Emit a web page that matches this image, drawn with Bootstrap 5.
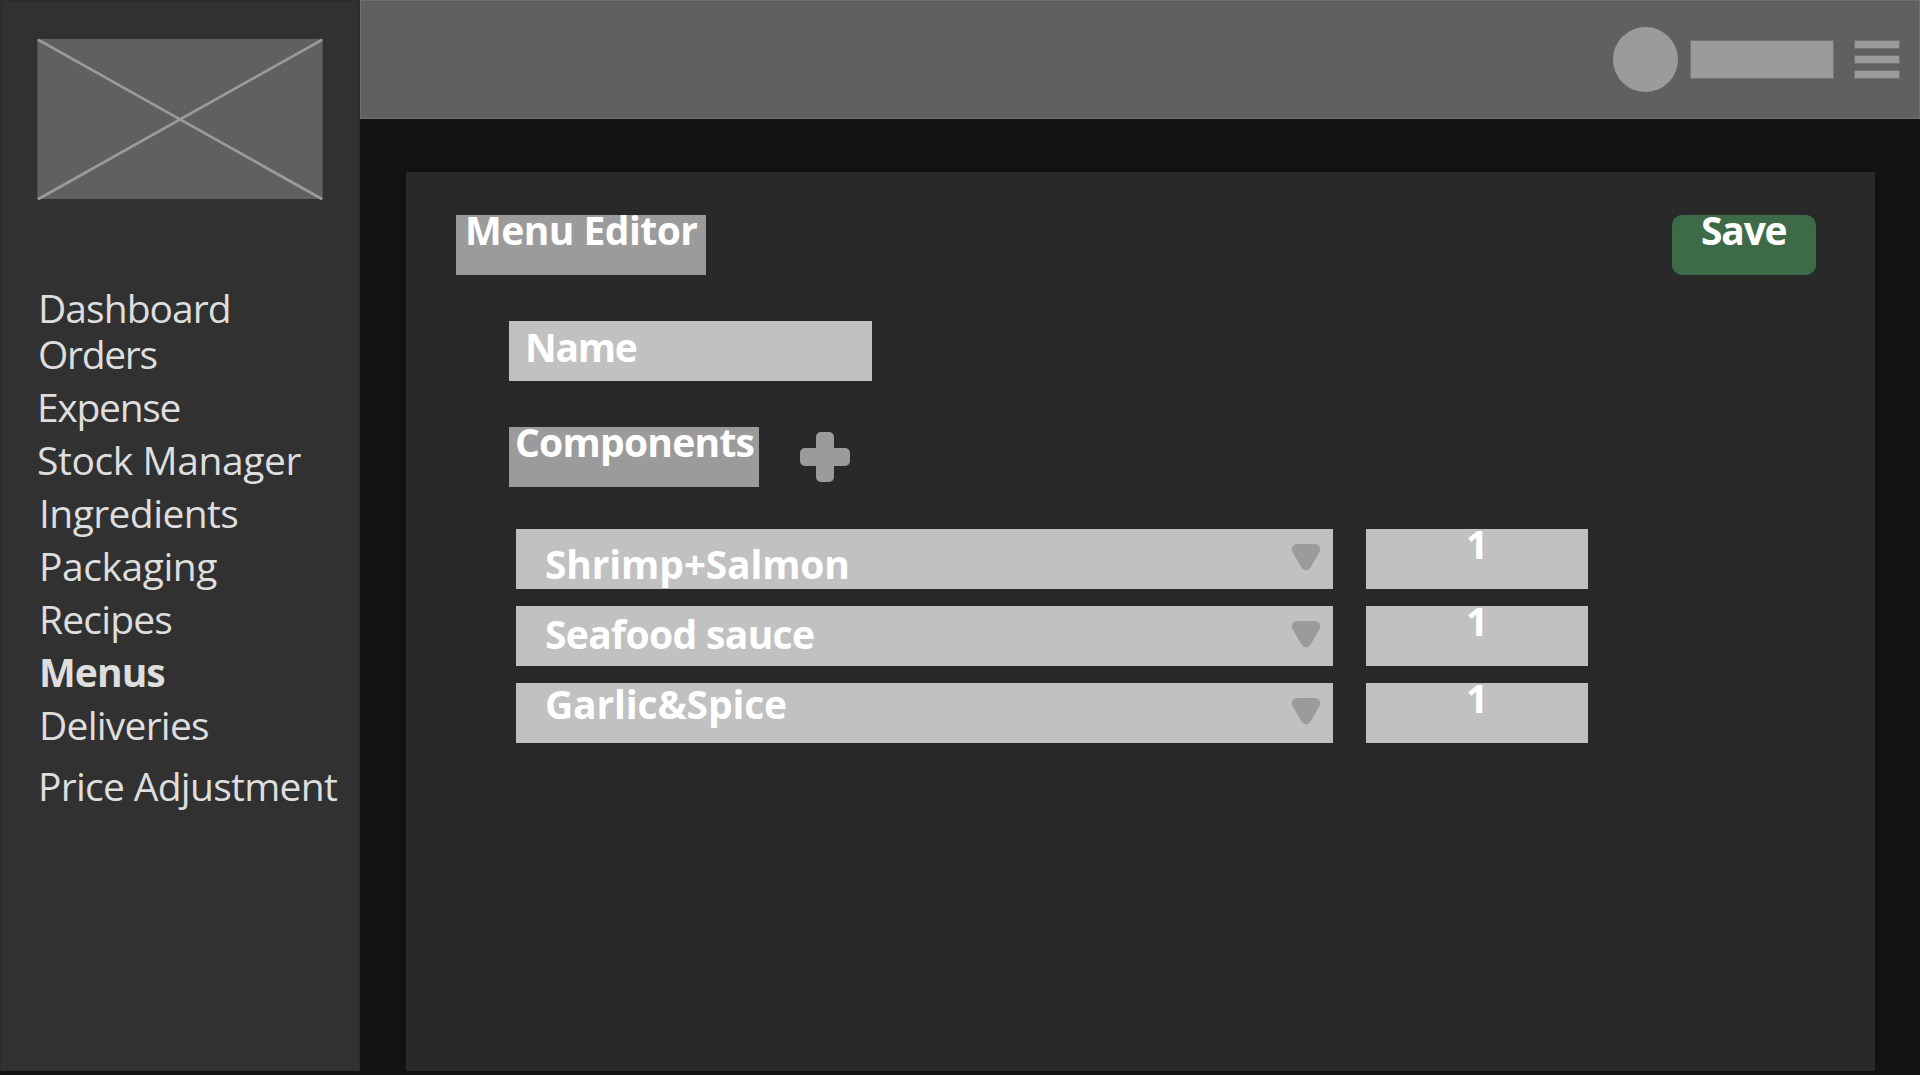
<!DOCTYPE html>
<html lang="en">
<head>
<meta charset="utf-8">
<meta name="viewport" content="width=device-width, initial-scale=1">
<title>Menu Editor</title>
<link href="https://cdn.jsdelivr.net/npm/bootstrap@5.3.0/dist/css/bootstrap.min.css" rel="stylesheet">
<style>
body{background:#121212;font-family:"Open Sans","Noto Sans",sans-serif;font-size:39px;height:1075px;overflow:hidden}
.shell{height:1071px}
.side{width:360px;background:#313131;border:1px solid #2b2b2b;padding:37px 0 0 36px}
.logo{display:block;width:288px;height:163px}
.side-nav{margin-top:80px;line-height:53px}
.side-nav a{color:#dedede;padding:0 0 0 1px;line-height:53px;font-size:39px;white-space:nowrap}
.top-bar{height:119px;background:#606060;border:1px solid #707070;padding-right:19px}
.avatar{width:65px;height:65px;background:#9b9b9b;margin-right:12px}
.user-name{width:144px;height:39px;background:#9b9b9b;border:1px solid #727272;margin-right:20px}
.burger{width:46px;height:39px;background:none}
.burger i{height:9px;background:#9b9b9b;border:1px solid #727272}
.panel{margin:53px 45px 0 46px;background:#292929;padding:43px 59px 0 50px}
.tag,.field,.save-btn{height:60px;line-height:29px;font-weight:700;color:#fff;white-space:nowrap;text-align:left}
.tag{width:250px;background:#9b9b9b}
.field{background:#c1c1c1}
.save-btn,.save-btn:hover{width:144px;background:#3d6b47;border:0;border-radius:10px;padding:0 0 0 29px;font-size:39px;color:#fff;letter-spacing:-1.2px;display:block}
.save-btn span{display:block;height:60px}
.editor{padding-left:53px}
.name-field{width:363px;margin-top:46px;padding:11px 0 0 16px;letter-spacing:-1.25px}
.comp-head{margin-top:46px}
.plus{width:50px;height:50px;margin-left:41px}
.rows{margin:42px 0 0 7px;gap:17px}
.pick{width:817px;padding-left:29px;padding-right:12px}
.pick svg{width:30px;height:27px;margin-top:15px}
.qty{width:222px;margin-left:33px;padding-left:100px}
</style>
</head>
<body>
<div class="shell d-flex">
  <aside class="side flex-shrink-0">
    <svg class="logo" viewBox="0 0 288 163"><rect x=".3" y="1" width="285.4" height="160" fill="#606060"/><path d="M1 1.6 285.3 161.2M285.3 1.6 1 161.2" stroke="#9b9b9b" stroke-width="2.7" fill="none"/></svg>
    <nav class="side-nav nav flex-column">
      <a class="nav-link" href="#" style="letter-spacing:-.95px">Dashboard</a>
      <a class="nav-link" href="#" style="letter-spacing:-1.3px;margin-top:-7px">Orders</a>
      <a class="nav-link" href="#" style="letter-spacing:-1.3px;margin-left:-1px">Expense</a>
      <a class="nav-link" href="#" style="letter-spacing:-.42px;margin-left:-1px">Stock Manager</a>
      <a class="nav-link" href="#" style="letter-spacing:-.59px;margin-left:1px">Ingredients</a>
      <a class="nav-link" href="#" style="letter-spacing:-.45px;margin-left:1px">Packaging</a>
      <a class="nav-link" href="#" style="letter-spacing:-.83px;margin-left:1px">Recipes</a>
      <a class="nav-link fw-bold active" href="#" style="letter-spacing:-.94px;margin-left:1px">Menus</a>
      <a class="nav-link" href="#" style="letter-spacing:-.77px;margin-left:1px">Deliveries</a>
      <a class="nav-link" href="#" style="letter-spacing:-.71px;margin-top:8px">Price Adjustment</a>
    </nav>
  </aside>
  <div class="flex-grow-1 d-flex flex-column">
    <header class="top-bar d-flex align-items-center justify-content-end">
      <div class="avatar rounded-circle"></div>
      <div class="user-name"></div>
      <button class="burger border-0 p-0 d-flex flex-column justify-content-between" aria-label="Menu"><i class="w-100"></i><i class="w-100"></i><i class="w-100"></i></button>
    </header>
    <main class="panel flex-grow-1">
      <div class="d-flex justify-content-between">
        <div class="tag" style="padding-left:9px;letter-spacing:-.54px">Menu Editor</div>
        <button class="save-btn"><span>Save</span></button>
      </div>
      <div class="editor">
        <div class="field name-field">Name</div>
        <div class="comp-head d-flex align-items-center">
          <div class="tag" style="padding-left:6px;letter-spacing:-.75px">Components</div>
          <svg class="plus" viewBox="0 0 50 50" fill="#9b9b9b"><rect x="16" width="18" height="50" rx="5"/><rect y="16" width="50" height="18" rx="5"/></svg>
        </div>
        <div class="rows d-flex flex-column">
          <div class="d-flex">
            <div class="field pick d-flex justify-content-between"><span style="letter-spacing:-.17px;padding-top:20px">Shrimp+Salmon</span><svg viewBox="0 0 30 27"><path d="M6 5.3H24L15 21Z" fill="#9b9b9b" stroke="#9b9b9b" stroke-width="10.5" stroke-linejoin="round"/></svg></div>
            <div class="field qty">1</div>
          </div>
          <div class="d-flex">
            <div class="field pick d-flex justify-content-between"><span style="letter-spacing:-.66px;padding-top:13px">Seafood sauce</span><svg viewBox="0 0 30 27"><path d="M6 5.3H24L15 21Z" fill="#9b9b9b" stroke="#9b9b9b" stroke-width="10.5" stroke-linejoin="round"/></svg></div>
            <div class="field qty">1</div>
          </div>
          <div class="d-flex">
            <div class="field pick d-flex justify-content-between"><span style="letter-spacing:-.15px;padding-top:6px">Garlic&amp;Spice</span><svg viewBox="0 0 30 27"><path d="M6 5.3H24L15 21Z" fill="#9b9b9b" stroke="#9b9b9b" stroke-width="10.5" stroke-linejoin="round"/></svg></div>
            <div class="field qty">1</div>
          </div>
        </div>
      </div>
    </main>
  </div>
</div>
<script src="https://cdn.jsdelivr.net/npm/bootstrap@5.3.0/dist/js/bootstrap.bundle.min.js"></script>
</body>
</html>
